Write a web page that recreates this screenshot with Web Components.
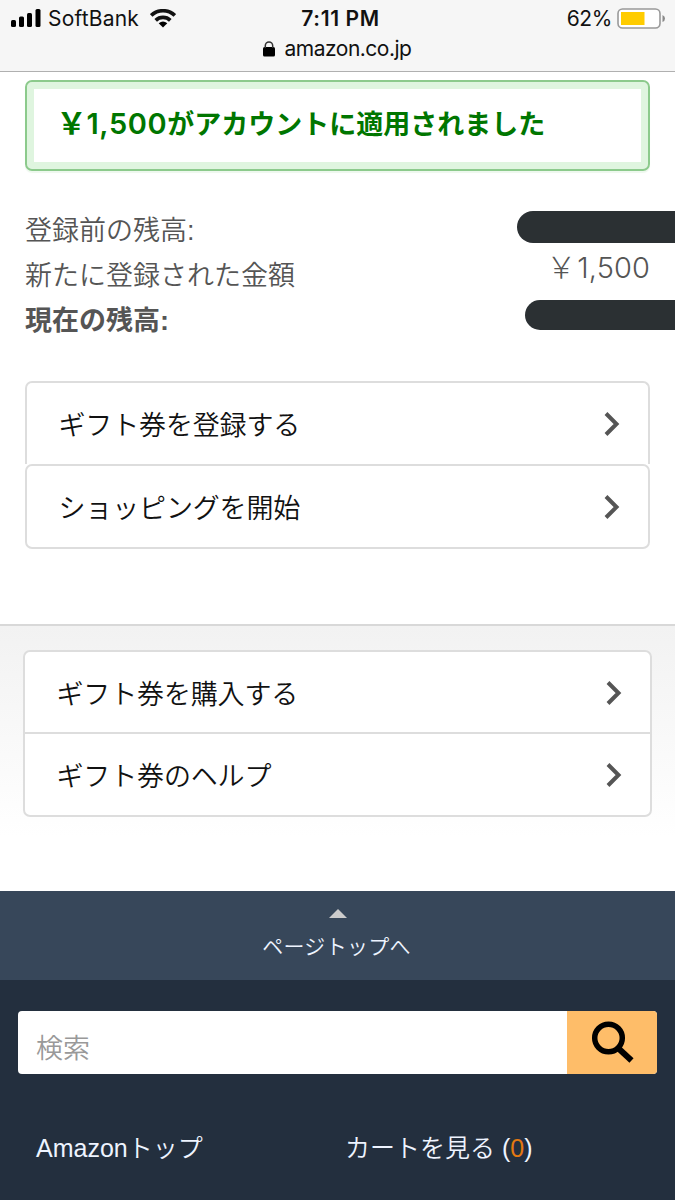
<!DOCTYPE html>
<html lang="ja">
<head>
<meta charset="utf-8">
<title>Amazon ギフト券</title>
<style>
body{margin:0;width:675px;height:1200px;overflow:hidden;background:#fff;font-family:"Liberation Sans","Noto Sans CJK JP",sans-serif}
</style>
</head>
<body>
<gift-page></gift-page>
<script>
const define = (name, markup) => {
  const t = document.createElement('template');
  t.innerHTML = markup;
  customElements.define(name, class extends HTMLElement {
    constructor() {
      super();
      this.attachShadow({mode: 'open'}).append(t.content.cloneNode(true));
    }
  });
};

define('phone-status', `
<style>
:host{display:block;box-sizing:border-box;height:72px;background:#f6f6f6;border-bottom:1px solid #b0b0b0;color:#111;font:21px/24px Inter,sans-serif}
.top{display:grid;grid-template-columns:1fr auto 1fr;height:36px;align-items:center}
.l{display:flex;align-items:center;padding-left:11px}
.l span{margin:2px 0 0 7px;letter-spacing:.2px}
.l .wifi{margin-left:11px}
.t{font-weight:600;font-size:21px;letter-spacing:.6px;padding:2px 0 0 6px}
.r{display:flex;align-items:center;justify-content:flex-end;padding-right:9px}
.r span{margin:2px 5px 0 0;letter-spacing:-.4px}
.u{display:flex;justify-content:center;align-items:center;height:26px;padding-right:1px}
.u svg{margin-right:10px}
.u span{letter-spacing:-.5px}
svg{display:block;flex:none}
</style>
<div class="top">
 <div class="l">
  <svg width="30" height="18" viewBox="0 0 30 18"><rect y="11" width="5" height="7" rx="1.5"/><rect x="8" y="7.500" width="5" height="10.500" rx="1.500"/><rect x="16" y="4" width="5" height="14" rx="1.500"/><rect x="24.500" width="5" height="18" rx="1.500"/></svg>
  <span>SoftBank</span>
  <svg class="wifi" width="26" height="19" viewBox="0 0 26 19"><g fill="none" stroke="#111" stroke-width="3.700"><path d="M1.200 6.500A17 17 0 0 1 24.800 6.500"/><path d="M5.700 11.300A10.500 10.500 0 0 1 20.300 11.300"/></g><path d="M8.700 14.200Q13 10.800 17.300 14.200L13 18.500Z"/></svg>
 </div>
 <div class="t">7:11 PM</div>
 <div class="r"><span>62%</span>
  <svg width="49" height="21" viewBox="0 0 49 21"><rect x="1" y="1" width="42" height="19" rx="4.500" fill="#fff" stroke="#999" stroke-width="1.600"/><rect x="4" y="4" width="23.500" height="13" fill="#fc0"/><path d="M45.500 7Q48 8 48 10.500T45.500 14Z" fill="#888"/></svg>
 </div>
</div>
<div class="u"><svg width="12" height="16" viewBox="0 0 12 16"><rect y="6" width="12" height="9.500" rx="1.500"/><path d="M2.300 7V4.700a3.700 3.700 0 0 1 7.400 0V7" fill="none" stroke="#333" stroke-width="1.500"/></svg><span>amazon.co.jp</span></div>
`);

define('success-alert', `
<style>
:host{display:block;box-sizing:border-box;height:91px;border:2px solid #8cca8c;border-radius:7px;box-shadow:inset 0 0 0 7px #dff5df,0 2px 1px #eef8ee;color:#007600;font-size:27px;font-weight:600;line-height:40px;padding:19px 0 0 31px;white-space:nowrap}
</style><slot></slot>`);

define('yen-amount', `
<style>
:host{display:inline-flex;align-items:baseline;font-family:Inter,sans-serif;font-size:29px;line-height:40px}
i{font-style:normal;font-family:"Noto Sans CJK JP",sans-serif;font-size:30px;width:var(--yen,30px);margin-left:-1.500px}
span{letter-spacing:var(--track,.6px)}
</style><i>￥</i><span><slot></slot></span>`);

define('balance-row', `
<style>
:host{display:flex;justify-content:space-between;height:45px;line-height:45px;font-size:27px;font-weight:350;color:#555;white-space:nowrap}
.k{padding-top:2px}
</style><span class="k"><slot></slot></span><slot name="value"></slot>`);

define('redacted-value', `
<style>
:host{display:block;background:#2b3033;border-radius:16px}
</style>`);

define('link-row', `
<style>
:host{display:flex;box-sizing:border-box;align-items:center;justify-content:space-between;height:81px;padding:0 28px 0 31.500px;font-size:27px;line-height:40px;font-weight:350;color:#111;white-space:nowrap}
span{padding-top:5px;letter-spacing:-.15px}
svg{display:block;margin-top:1px}
</style><span><slot></slot></span>
<svg width="16" height="24" viewBox="0 0 16 24" fill="none" stroke="#555" stroke-width="4"><path d="M2 1.500L12.500 12L2 22.500"/></svg>`);

define('page-top', `
<style>
:host{display:flex;flex-direction:column;align-items:center;box-sizing:border-box;height:89px;padding-top:18px;background:#37475a;color:#eef4ff;font-size:21px;font-weight:350;line-height:32px}
svg{display:block;margin-bottom:13px}
span{letter-spacing:.3px;margin-right:2px}
</style><svg width="18" height="9"><path d="M9 0L18 9H0Z" fill="#ccc"/></svg><span><slot></slot></span>`);

define('search-bar', `
<style>
:host{display:flex;height:63px;border-radius:4px;overflow:hidden;background:#fff}
.q{flex:1;padding:8px 0 0 18px;font-size:27px;font-weight:350;line-height:60px;color:#999}
.b{width:90px;background:#febd69}
svg{display:block}
</style><div class="q"><slot></slot></div>
<div class="b"><svg width="90" height="63" fill="none" stroke="#000"><circle cx="41.500" cy="27" r="13.800" stroke-width="5.500"/><path d="M51 37L64.500 49.500" stroke-width="6"/></svg></div>`);

define('gift-page', `
<style>
:host{display:flex;flex-direction:column;height:1200px}
.main{box-sizing:border-box;height:554px;padding:8px 25px 0;border-bottom:2px solid #d8d8d8}
.bal{padding-top:36px}
redacted-value{margin-right:-45px}
.a{width:178px;height:32px;margin-top:4px}
.b{width:170px;height:30px;margin-top:3px}
yen-amount.n{font-weight:300;line-height:32px;margin-top:-3px;--yen:31px;--track:.1px}
.links{margin-top:39px}
.box,.second{box-sizing:border-box;border:2px solid #ddd;border-radius:7px}
.box.f{border-radius:7px 7px 0 0;height:83px;border-bottom:0}
.box.s{height:85px}
.more{box-sizing:border-box;height:265px;padding:24px 23px;background:linear-gradient(#f2f2f2,#fff 210px)}
.second{height:167px;background:#fff}
.second link-row:first-child{height:82px;border-bottom:2px solid #ddd}
.second link-row{height:81px}
.foot{height:220px;box-sizing:border-box;background:#232f3e;padding:31px 18px 0}
.nav{display:grid;grid-template-columns:309px 1fr;margin:54px 0 0 18px;color:#eef4ff;font-size:25px;font-weight:350;line-height:40px;white-space:nowrap}
.nav b{color:#e47911;font-weight:400}
</style>
<phone-status></phone-status>
<div class="main">
 <success-alert><yen-amount>1,500</yen-amount>がアカウントに適用されました</success-alert>
 <div class="bal">
  <balance-row>登録前の残高:<redacted-value class="a" slot="value"></redacted-value></balance-row>
  <balance-row>新たに登録された金額<yen-amount class="n" slot="value">1,500</yen-amount></balance-row>
  <balance-row style="font-weight:700">現在の残高:<redacted-value class="b" slot="value"></redacted-value></balance-row>
 </div>
 <div class="links">
  <div class="box f"><link-row>ギフト券を登録する</link-row></div>
  <div class="box s"><link-row>ショッピングを開始</link-row></div>
 </div>
</div>
<div class="more"><div class="second"><link-row>ギフト券を購入する</link-row><link-row>ギフト券のヘルプ</link-row></div></div>
<page-top>ページトップへ</page-top>
<div class="foot">
 <search-bar>検索</search-bar>
 <div class="nav"><span>Amazonトップ</span><span>カートを見る (<b>0</b>)</span></div>
</div>`);
</script>
</body>
</html>
